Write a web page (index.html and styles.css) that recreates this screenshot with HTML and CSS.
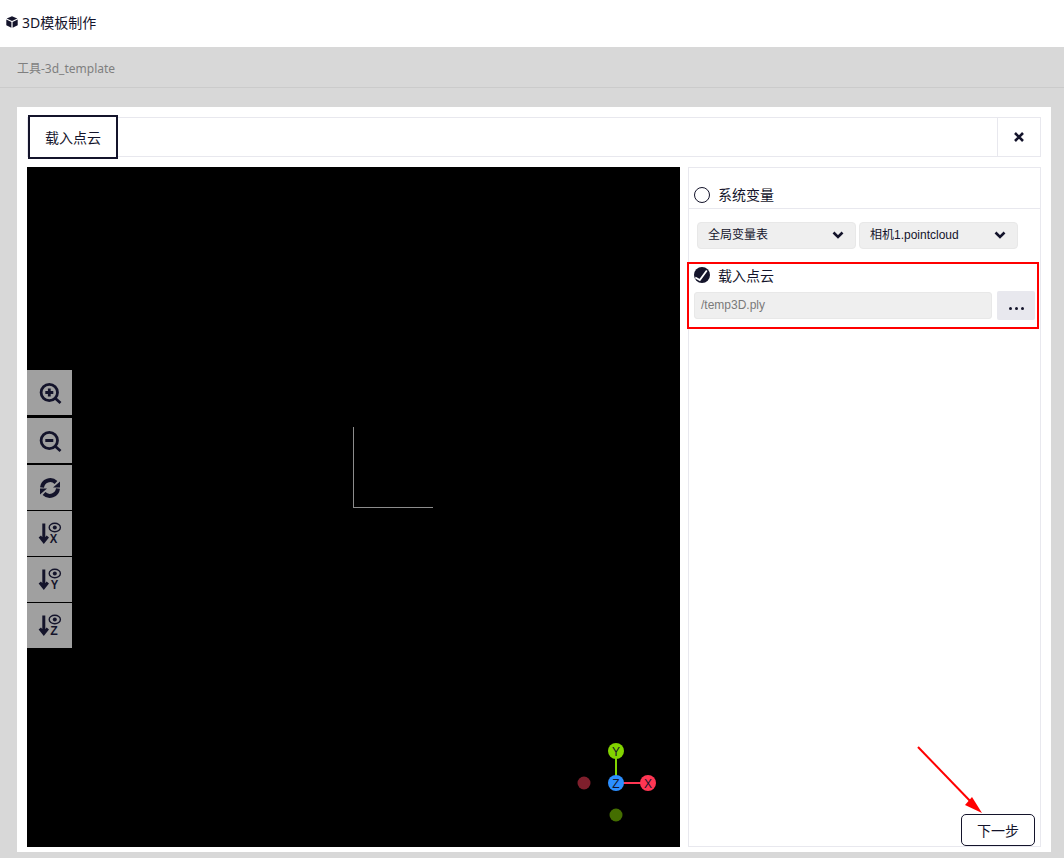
FILE: index.html
```html
<!DOCTYPE html>
<html lang="zh">
<head>
<meta charset="utf-8">
<title>3D模板制作</title>
<link rel="stylesheet" href="styles.css">
</head>
<body>
<header class="topbar">
  <svg class="cube" viewBox="0 0 12 12"><path d="M6 .2 11.300 2.500 6 4.900 .7 2.500Z"/><path d="M.3 3.500 5.400 5.900V11.800L.3 9.300Z"/><path d="M11.700 3.500 6.600 5.900V11.800L11.700 9.300Z"/></svg>
  <span>3D模板制作</span>
</header>
<div class="crumb"><span>工具-3d_template</span></div>
<main class="page">
  <section class="panel">
    <div class="tabs">
      <div class="tab"><span>载入点云</span></div>
      <div class="tab-fill"></div>
      <div class="tab-close"><svg viewBox="0 0 10 10"><path d="M1 1 9 9M9 1 1 9"/></svg></div>
    </div>
    <div class="work">
      <div class="viewer">
        <div class="tools">
          <div class="tool first"><svg viewBox="0 0 24 24"><circle cx="11.300" cy="11.500" r="8.200"/><path d="m17.500 17.500 5 4.500M11.300 7.500v8M7.300 11.500h8"/></svg></div>
          <div class="tool"><svg viewBox="0 0 24 24"><circle cx="11.300" cy="11.500" r="8.200"/><path d="m17.500 17.500 5 4.500M7.300 11.500h8"/></svg></div>
          <div class="tool thin-gap"><svg viewBox="0 0 24 24"><path class="thick" d="M4 11.500A8.300 8.300 0 0 1 18 6.500M20 12.500A8.300 8.300 0 0 1 6 17.500"/><path class="solid" d="M22 5.500V11.500H15ZM2 18.500V12.500H9Z"/></svg></div>
          <div class="tool thin-gap"><svg viewBox="0 0 24 24"><path class="arrow" d="M5.800 1.500V19M1.800 14.500 5.800 19.500 9.800 14.500"/><ellipse class="eye" cx="16.800" cy="5.500" rx="5.600" ry="4.200"/><circle class="solid" cx="16.800" cy="5.500" r="2"/><text x="15.500" y="20.500" textLength="7.500" lengthAdjust="spacingAndGlyphs">X</text></svg></div>
          <div class="tool thin-gap"><svg viewBox="0 0 24 24"><path class="arrow" d="M5.800 1.500V19M1.800 14.500 5.800 19.500 9.800 14.500"/><ellipse class="eye" cx="16.800" cy="5.500" rx="5.600" ry="4.200"/><circle class="solid" cx="16.800" cy="5.500" r="2"/><text x="16.500" y="20.500" textLength="7.500" lengthAdjust="spacingAndGlyphs">Y</text></svg></div>
          <div class="tool thin-gap"><svg viewBox="0 0 24 24"><path class="arrow" d="M5.800 1.500V19M1.800 14.500 5.800 19.500 9.800 14.500"/><ellipse class="eye" cx="16.800" cy="5.500" rx="5.600" ry="4.200"/><circle class="solid" cx="16.800" cy="5.500" r="2"/><text x="16" y="20.500" textLength="7.500" lengthAdjust="spacingAndGlyphs">Z</text></svg></div>
        </div>
        <div class="axes"></div>
        <svg class="gizmo" viewBox="0 0 84 84">
          <line class="ly" x1="38" y1="38" x2="38" y2="6"/>
          <line class="lx" x1="38" y1="38" x2="70" y2="38"/>
          <circle class="nx" cx="6" cy="38" r="6.500"/>
          <circle class="ny" cx="38" cy="70" r="6.500"/>
          <circle class="py" cx="38" cy="6" r="8"/>
          <circle class="px" cx="70" cy="38" r="8"/>
          <circle class="pz" cx="38" cy="38" r="8"/>
          <text x="38" y="10.500">Y</text><text x="70" y="42.500">X</text><text x="38" y="42.500">Z</text>
        </svg>
      </div>
      <aside class="side">
        <label class="opt opt-first"><span class="radio"></span><span>系统变量</span></label>
        <div class="selects">
          <div class="select s1"><span>全局变量表</span><svg viewBox="0 0 12 8"><path d="M1.500 1.500 6 6l4.500-4.500"/></svg></div>
          <div class="select s2"><span>相机1.pointcloud</span><svg viewBox="0 0 12 8"><path d="M1.500 1.500 6 6l4.500-4.500"/></svg></div>
        </div>
        <div class="load">
          <label class="opt opt-second"><svg class="checked" viewBox="0 0 16 16"><circle cx="8" cy="8" r="8"/><path d="M1.300 10.500 5.800 13 12.800 3.500"/></svg><span>载入点云</span></label>
          <div class="path-row">
            <div class="path">/temp3D.ply</div>
            <div class="more"><i></i><i></i><i></i></div>
          </div>
        </div>
        <button class="next">下一步</button>
      </aside>
    </div>
  </section>
</main>
<svg class="callout" viewBox="0 0 80 80"><line x1="1" y1="0" x2="56" y2="57"/><path d="M65 66 48 58 55 50Z"/></svg>
</body>
</html>
```

FILE: styles.css
```css
* { box-sizing: border-box; }
html, body { margin: 0; height: 858px; overflow: hidden; }
body {
  position: relative;
  background: #d8d8d8;
  color: #14142b;
  font-family: "Noto Sans", "Noto Sans CJK SC", sans-serif;
  font-size: 14px;
}
.topbar {
  height: 47px;
  background: #fff;
  display: flex;
  align-items: center;
  gap: 4px;
  padding-left: 6px;
  padding-bottom: 3px;
}
.cube { width: 12px; height: 12px; fill: #14142b; }
.crumb {
  height: 41px;
  padding: 13px 0 0 17px;
  font-size: 12px;
  line-height: 18px;
  color: #7f7f7f;
  border-bottom: 1px solid #cbcbcb;
}
.page { padding: 19px 13px 0 17px; }
.panel {
  height: 745px;
  background: #fff;
  padding: 10px;
}
.tabs {
  height: 40px;
  display: flex;
  border: 1px solid #e8e8ee;
  position: relative;
}
.tab {
  margin: -3px 0 -3px 0;
  width: 90px;
  border: 2px solid #14142b;
  background: #fff;
  display: flex;
  align-items: center;
  justify-content: center;
  line-height: 20px;
  padding-top: 2px;
}
.tab-fill { flex: 1; }
.tab-close {
  width: 43px;
  border-left: 1px solid #e8e8ee;
  display: flex;
  align-items: center;
  justify-content: center;
}
.tab-close svg { width: 10px; height: 10px; fill: none; stroke: #14142b; stroke-width: 2.600; }
.work {
  display: flex;
  gap: 8px;
  margin-top: 10px;
  height: 680px;
}
.viewer {
  width: 653px;
  background: #000;
  position: relative;
}
.tools {
  position: absolute;
  left: 0;
  top: 203px;
  display: flex;
  flex-direction: column;
  width: 45px;
}
.tool {
  height: 45px;
  margin-bottom: 2px;
  background: #a0a0a0;
  display: flex;
  align-items: center;
  justify-content: center;
}
.tool.first { margin-bottom: 3px; }
.tool.thin-gap { margin-bottom: 1px; }
.tool svg {
  width: 24px;
  height: 24px;
  fill: none;
  stroke: #14142b;
  stroke-width: 2.800;
}
.tool .solid { fill: #14142b; stroke: none; }
.tool .thick { stroke-width: 4; }
.tool .arrow { stroke-width: 3; }
.tool .eye { stroke-width: 1.400; }
.tool text {
  font-family: "Liberation Sans", sans-serif;
  font-size: 13px;
  font-weight: 700;
  fill: #14142b;
  stroke: none;
  text-anchor: middle;
}
.axes {
  position: absolute;
  left: 326px;
  top: 260px;
  width: 80px;
  height: 81px;
  border-left: 1px solid #8c8c8c;
  border-bottom: 1px solid #8c8c8c;
}
.gizmo {
  position: absolute;
  left: 551px;
  top: 578px;
  width: 84px;
  height: 84px;
  overflow: visible;
}
.gizmo line { stroke-width: 2; }
.gizmo .ly { stroke: #82d400; }
.gizmo .lx { stroke: #ff3653; }
.gizmo .nx { fill: #7f1f2c; }
.gizmo .ny { fill: #446e00; }
.gizmo .py { fill: #82d400; }
.gizmo .px { fill: #ff3653; }
.gizmo .pz { fill: #2c8fff; }
.gizmo text {
  font-family: "Liberation Sans", sans-serif;
  font-size: 12px;
  fill: #14142b;
  text-anchor: middle;
}
.side {
  flex: 1;
  border: 1px solid #e8e8ee;
  position: relative;
}
.opt {
  display: flex;
  align-items: center;
  gap: 8px;
  padding-left: 5px;
  line-height: 20px;
}
.opt-first {
  height: 41px;
  padding-top: 13px;
  border-bottom: 1px solid #e8e8ee;
}
.radio {
  width: 16px;
  height: 16px;
  border-radius: 50%;
  border: 1px solid #14142b;
}
.selects {
  display: flex;
  gap: 3px;
  padding: 13px 0 0 8px;
}
.select {
  height: 27px;
  background: #efefef;
  border: 1px solid #e8e8e8;
  border-radius: 4px;
  display: flex;
  align-items: center;
  justify-content: space-between;
  padding: 0 11px 0 10px;
  font-family: "Liberation Sans", "Noto Sans CJK SC", sans-serif;
  font-size: 12px;
}
.select span { padding-bottom: 4px; }
.select svg { width: 12px; height: 8px; margin-bottom: 1px; fill: none; stroke: #14142b; stroke-width: 2.600; }
.s1 { width: 159px; }
.s2 { width: 159px; }
.load {
  position: absolute;
  left: -2px;
  top: 94px;
  width: 352px;
  height: 67px;
  border: 2px solid #f00;
}
.opt-second { height: 24px; padding-left: 5px; }
.checked { width: 16px; height: 16px; margin-top: -2px; fill: #14142b; }
.checked path { fill: none; stroke: #fff; stroke-width: 1.800; }
.path-row {
  display: flex;
  gap: 5px;
  padding-left: 5px;
  align-items: center;
  margin-top: 3px;
}
.path {
  width: 298px;
  height: 27px;
  background: #efefef;
  border: 1px solid #e8e8e8;
  border-radius: 3px;
  padding-left: 6px;
  font-family: "Liberation Sans", sans-serif;
  font-size: 12px;
  line-height: 25px;
  color: #7a7a7a;
}
.more {
  width: 38px;
  height: 29px;
  background: #e8e8ee;
  border-radius: 2px;
  display: flex;
  align-items: center;
  justify-content: center;
  gap: 3px;
  padding-top: 6px;
}
.more i { width: 3px; height: 3px; background: #14142b; border-radius: 50%; }
.next {
  position: absolute;
  right: 5px;
  bottom: 0;
  width: 74px;
  height: 32px;
  background: #fff;
  border: 1px solid #14142b;
  border-radius: 5px;
  color: #14142b;
  font: inherit;
  padding: 0;
}
.callout {
  position: absolute;
  left: 917px;
  top: 747px;
  width: 80px;
  height: 80px;
  overflow: visible;
}
.callout line { stroke: #f00; stroke-width: 2; }
.callout path { fill: #f00; }
```
